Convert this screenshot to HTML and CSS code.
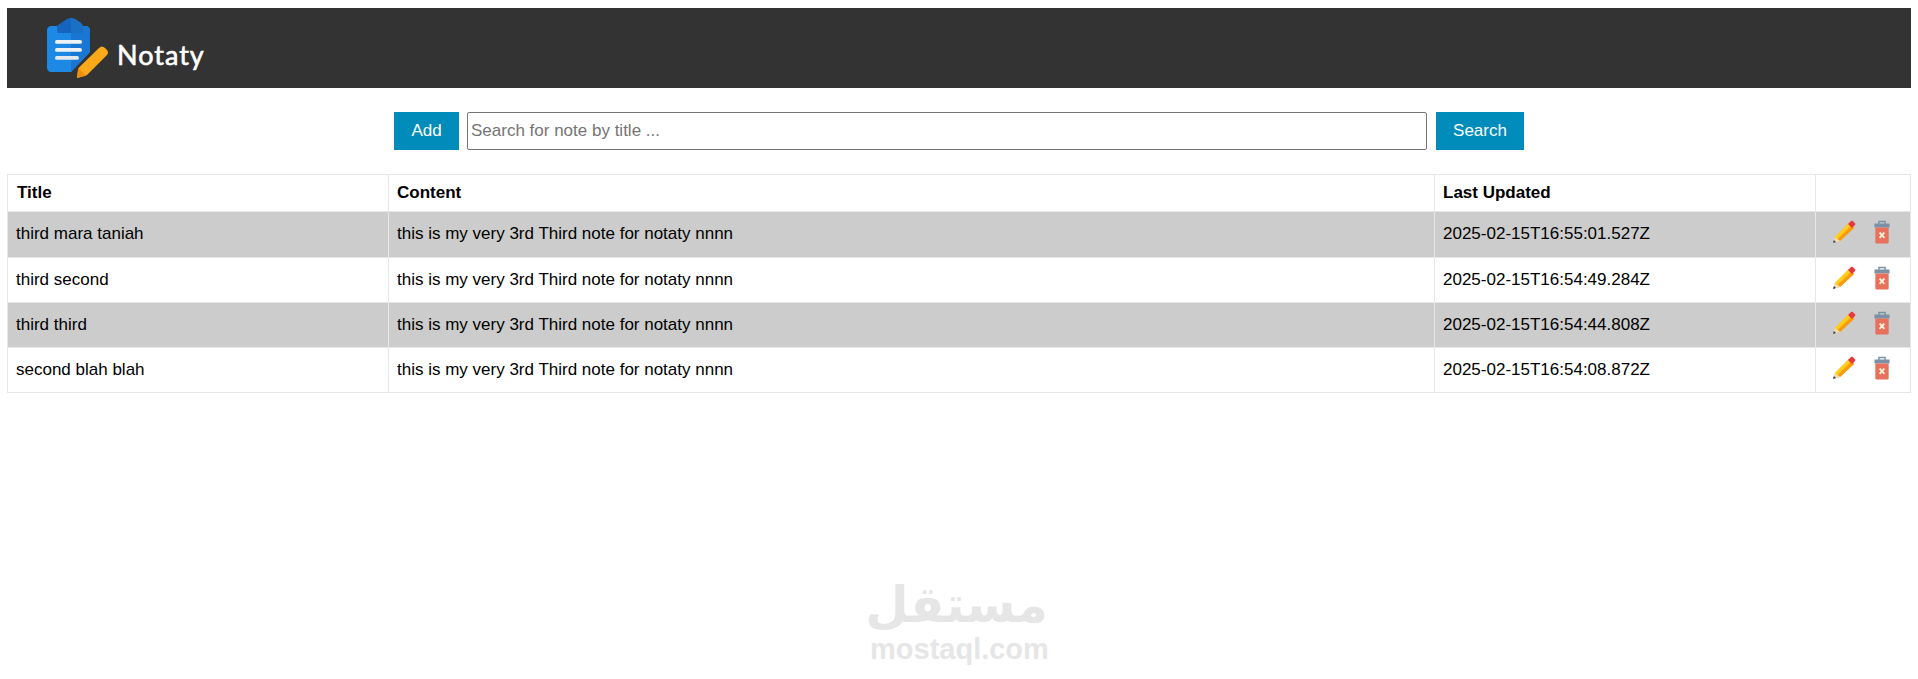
FILE: index.html
```html
<!DOCTYPE html>
<html lang="en">
<head>
<meta charset="utf-8">
<title>Notaty</title>
<link rel="stylesheet" href="styles.css">
</head>
<body>
<header class="topbar">
  <svg class="logo-mark" width="62" height="62" viewBox="0 0 62 62" aria-hidden="true">
    <path d="M4 8h11l8-8h2l7 8h7c2 0 4 2 4 4v22L24 54H4c-2 0-4-2-4-4V12c0-2 2-4 4-4z" fill="#1e88e5"/>
    <path d="M24 0h1l7 8h7c2 0 4 2 4 4v22L24 54z" fill="#1976d2"/>
    <path d="M10 8l4-3 6-4c2-1 6-1 8 0l6 4 2 3c0 3 0 6-1 7H11c-1-1-1-4-1-7z" fill="#1565c0"/>
    <path d="M24 .2c1.500 0 3 .3 4 .8l6 4 2 3c0 3 0 6-1 7H24z" fill="#1a70c4"/>
    <rect x="8" y="22" width="27" height="3.800" rx="1.900" fill="#eef2f6"/>
    <rect x="8" y="30" width="27" height="3.800" rx="1.900" fill="#eef2f6"/>
    <rect x="8" y="38" width="24" height="3.800" rx="1.900" fill="#e4e9ee"/>
    <path d="M30 60l1-8c.3-1.500 1-2.500 2-3.500L52 30c2-2 4-2 6 0l1.500 1.500c2 2 2 4 0 6L41 56c-1 1-2 1.600-3.500 2z" fill="#fba919"/>
    <path d="M30 60l1-8c.1-.7.300-1.200.6-1.800l7.500 7.200c-.5.200-1 .4-1.600.6z" fill="#ee8f0a"/>
  </svg>
  <span class="logo-text">Notaty</span>
</header>

<form class="toolbar">
  <button class="btn btn-add" type="button">Add</button>
  <input class="search-input" type="text" placeholder="Search for note by title ...">
  <button class="btn btn-search" type="button">Search</button>
</form>

<table class="notes">
  <colgroup>
    <col class="col-title"><col class="col-content"><col class="col-date"><col class="col-actions">
  </colgroup>
  <thead>
    <tr><th class="th-first">Title</th><th>Content</th><th>Last Updated</th><th></th></tr>
  </thead>
  <tbody>
    <tr class="shade">
      <td>third mara taniah</td><td>this is my very 3rd Third note for notaty nnnn</td><td>2025-02-15T16:55:01.527Z</td>
      <td class="actions">
        <div class="action-row">
          <svg class="ico" width="24" height="24" viewBox="0 0 24 24"><use href="#pencil"/></svg>
          <svg class="ico" width="16" height="24" viewBox="0 0 18 24" preserveAspectRatio="none"><use href="#trash"/></svg>
        </div>
      </td>
    </tr>
    <tr>
      <td>third second</td><td>this is my very 3rd Third note for notaty nnnn</td><td>2025-02-15T16:54:49.284Z</td>
      <td class="actions">
        <div class="action-row">
          <svg class="ico" width="24" height="24" viewBox="0 0 24 24"><use href="#pencil"/></svg>
          <svg class="ico" width="16" height="24" viewBox="0 0 18 24" preserveAspectRatio="none"><use href="#trash"/></svg>
        </div>
      </td>
    </tr>
    <tr class="shade">
      <td>third third</td><td>this is my very 3rd Third note for notaty nnnn</td><td>2025-02-15T16:54:44.808Z</td>
      <td class="actions">
        <div class="action-row">
          <svg class="ico" width="24" height="24" viewBox="0 0 24 24"><use href="#pencil"/></svg>
          <svg class="ico" width="16" height="24" viewBox="0 0 18 24" preserveAspectRatio="none"><use href="#trash"/></svg>
        </div>
      </td>
    </tr>
    <tr>
      <td>second blah blah</td><td>this is my very 3rd Third note for notaty nnnn</td><td>2025-02-15T16:54:08.872Z</td>
      <td class="actions">
        <div class="action-row">
          <svg class="ico" width="24" height="24" viewBox="0 0 24 24"><use href="#pencil"/></svg>
          <svg class="ico" width="16" height="24" viewBox="0 0 18 24" preserveAspectRatio="none"><use href="#trash"/></svg>
        </div>
      </td>
    </tr>
  </tbody>
</table>

<div class="watermark">
  <div class="wm-ar" lang="ar" dir="rtl">مستقل</div>
  <div class="wm-en">mostaql.com</div>
</div>

<svg class="defs" width="0" height="0" aria-hidden="true">
  <defs>
    <g id="pencil">
      <path d="M1 23l2-6L17 3l5 5L8 21z" fill="#fdb515"/>
      <path d="M3 17L17 3l2 2L5 19z" fill="#fdd017"/>
      <path d="M8 21l14-13-2-2L6 19z" fill="#f79a12"/>
      <path d="M16 4l3-3c.6-.5 1.200-.5 1.800 0l2.200 2.200c.5.6.5 1.200 0 1.800l-3 3z" fill="#e5393f"/>
      <path d="M1 23l2-6 5 4z" fill="#f6dcb5"/>
      <path d="M1 23l.9-3 2.100 2z" fill="#1f3c73"/>
    </g>
    <g id="trash">
      <path d="M5.500 4V1.500h7V4" fill="none" stroke="#7b92a6" stroke-width="1.600"/>
      <rect x="0.500" y="3.500" width="17" height="4" fill="#7b92a6"/>
      <path d="M1.500 7.500h15V22c0 1-.7 1.500-1.500 1.500H3c-.8 0-1.500-.5-1.500-1.500z" fill="#e9705a"/>
      <path d="M6.300 12.500l5.400 5.400M11.700 12.500l-5.400 5.400" stroke="#fdf1d8" stroke-width="2" fill="none"/>
    </g>
  </defs>
</svg>
</body>
</html>
```
FILE: styles.css
```css
html, body { background: #fff; }
body {
  margin: 8px 7px 0;
  font-family: "Liberation Sans", Arial, sans-serif;
  font-size: 17px;
  color: #000;
  min-height: 671px;
  box-sizing: border-box;
  position: relative;
}
.topbar {
  height: 80px;
  background: #333;
  display: flex;
  align-items: flex-start;
  padding: 10px 0 0 40px;
  box-sizing: border-box;
}
.logo-mark { flex: none; }
.logo-text {
  margin: 20px 0 0 8px;
  font-family: "Lato", sans-serif;
  font-weight: 400;
  font-size: 27px;
  line-height: 34px;
  letter-spacing: 1px;
  color: #fff;
  -webkit-text-stroke: 0.6px #fff;
}
.toolbar {
  display: flex;
  justify-content: center;
  margin: 24px 0;
  height: 38px;
}
.btn {
  height: 38px;
  border: 0;
  padding: 0;
  background: #008cba;
  color: #fff;
  font: 17px "Liberation Sans", Arial, sans-serif;
}
.btn-add { width: 65px; margin-right: 8px; }
.btn-search { width: 88px; margin-left: 9px; }
.search-input {
  width: 960px;
  height: 38px;
  box-sizing: border-box;
  border: 1px solid #767676;
  border-radius: 2px;
  padding: 0 4px 0 3px;
  font: 17px "Liberation Sans", Arial, sans-serif;
  background: #fff;
  outline: none;
}
.search-input::placeholder { color: #757575; opacity: 1; }
.notes {
  width: 1903px;
  table-layout: fixed;
  border-collapse: collapse;
  background: #fff;
}
.col-title { width: 381px; }
.col-content { width: 1046px; }
.col-date { width: 381px; }
.col-actions { width: 95px; }
.notes th, .notes td {
  border: 1px solid #e7e7e7;
  padding: 0 8px;
  text-align: left;
  font-size: 17px;
}
.notes th { height: 36px; font-weight: 700; }
.notes th.th-first { padding-left: 9px; }
.notes td { height: 44px; }
.shade td { background: #ccc; }
.notes td.actions { padding: 0 0 0 16px; }
.notes tbody tr:first-child td { padding-bottom: 1px; }
.action-row {
  display: flex;
  gap: 18px;
  margin-bottom: 4px;
}
.ico { display: block; flex: none; }
.defs { position: absolute; }
.watermark {
  position: absolute;
  left: 863px;
  top: 568px;
  width: 178px;
  text-align: center;
  color: #e6e6e6;
  font-weight: 700;
}
.wm-ar {
  font-family: "DejaVu Sans", sans-serif;
  font-size: 50px;
  line-height: 58px;
}
.wm-en {
  font-size: 29px;
  line-height: 30px;
}
```
